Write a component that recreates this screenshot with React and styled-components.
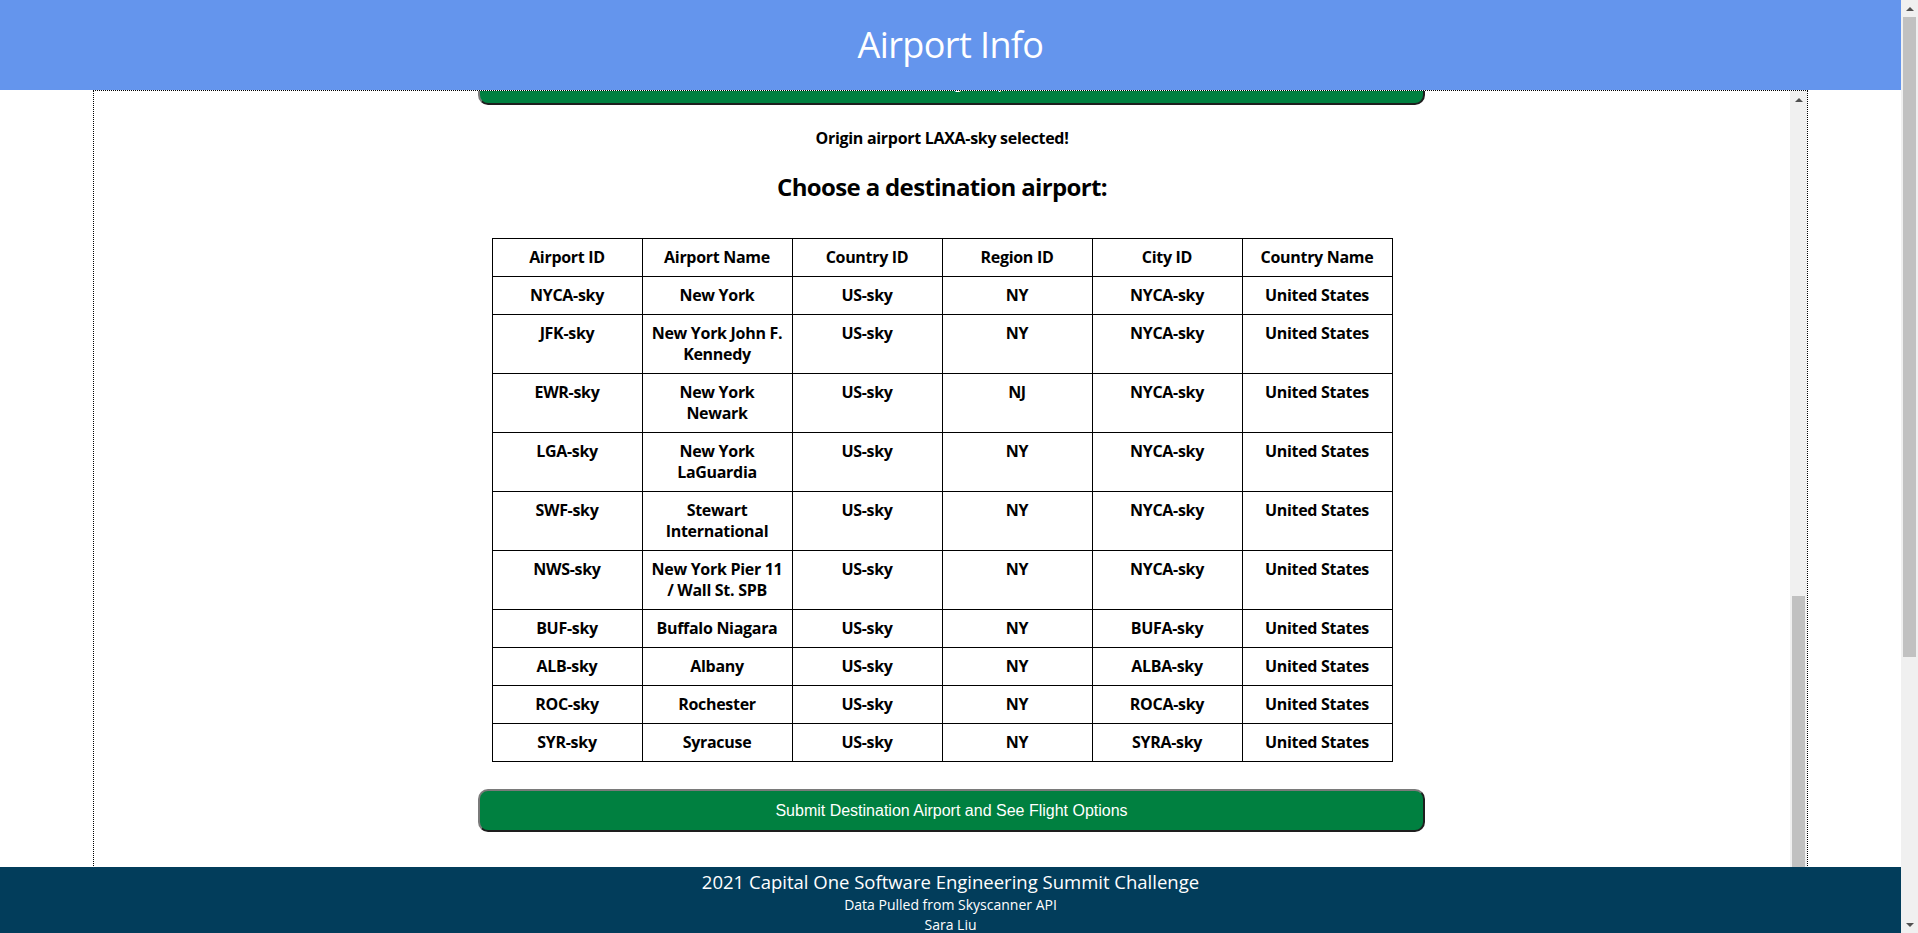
import React, { useLayoutEffect, useRef } from "react";
import styled, { createGlobalStyle } from "styled-components";

const GlobalStyle = createGlobalStyle`
  html, body {
    margin: 0;
    padding: 0;
    overflow: hidden;
  }
  body {
    font-family: "Open Sans", "Noto Sans", sans-serif;
    background: #ffffff;
    color: #000000;
  }
`;

/* ---------- window shell with a classic scrollbar rail ---------- */

const Shell = styled.div`
  display: flex;
  height: 100vh;
  overflow: hidden;
`;

const Page = styled.div`
  position: relative;
  flex: 1;
  min-width: 0;
  overflow: hidden;
`;

const Rail = styled.div`
  flex: none;
  width: 17px;
  height: ${(p) => p.$height};
  display: flex;
  flex-direction: column;
  background: #f0f0f0;
`;

const RailButton = styled.div`
  flex: none;
  height: 17px;
  display: flex;
  align-items: center;
  justify-content: center;
`;

const Arrow = styled.span`
  width: 0;
  height: 0;
  border-left: 4px solid transparent;
  border-right: 4px solid transparent;
  ${(p) =>
    p.$down
      ? "border-top: 4px solid #505050;"
      : "border-bottom: 4px solid #505050;"}
`;

const Track = styled.div`
  position: relative;
  flex: 1;
`;

const Thumb = styled.div`
  position: absolute;
  left: 2px;
  right: 2px;
  background: #c1c1c1;
`;

function Scrollbar({ height, thumbTop, thumbHeight }) {
  return (
    <Rail $height={height}>
      <RailButton>
        <Arrow />
      </RailButton>
      <Track>
        <Thumb style={{ top: thumbTop, height: thumbHeight }} />
      </Track>
      <RailButton>
        <Arrow $down />
      </RailButton>
    </Rail>
  );
}

/* ---------- header / footer ---------- */

const Header = styled.header`
  height: 90px;
  background: #6495ed;
  display: flex;
  align-items: center;
  justify-content: center;
`;

const Title = styled.h1`
  margin: 0;
  color: #ffffff;
  font-size: 36px;
  font-weight: 400;
  letter-spacing: -0.6px;
  line-height: 48px;
`;

const Footer = styled.footer`
  position: absolute;
  left: 0;
  right: 0;
  bottom: 0;
  height: 66px;
  box-sizing: border-box;
  padding-top: 2px;
  background: #023d5b;
  color: #ffffff;
  display: flex;
  flex-direction: column;
  align-items: center;
  overflow: hidden;
`;

const FooterTitle = styled.div`
  font-size: 18.5px;
  line-height: 26px;
`;

const FooterLine = styled.div`
  font-size: 14px;
  line-height: 20px;
`;

/* ---------- scrolling panel ---------- */

const Panel = styled.main`
  display: flex;
  box-sizing: border-box;
  margin: 0 93px;
  height: 1200px;
  border: 1px dotted #000000;
`;

const PanelViewport = styled.div`
  position: relative;
  flex: 1;
  min-width: 0;
  overflow: hidden;
`;

/* the panel is scrolled: earlier steps of the form sit above the visible area */
const Content = styled.div`
  display: flex;
  flex-direction: column;
  align-items: center;
  padding: 815px 0 460px;
`;

const SubmitButton = styled.button`
  align-self: flex-start;
  margin: ${(p) => p.$top}px 0 0 384px;
  width: 947px;
  height: 43px;
  box-sizing: border-box;
  border-style: solid;
  border-width: 2px;
  border-color: #7a7a7a #1e1e1e #1e1e1e #7a7a7a;
  border-radius: 10px;
  background: #008040;
  color: #ffffff;
  font-family: "Liberation Sans", Arial, sans-serif;
  font-size: 16px;
  line-height: 37px;
  padding: 0;
  cursor: pointer;
`;

const Notice = styled.p`
  margin: 22px 0 0;
  font-size: 16px;
  font-weight: 700;
  line-height: 22px;
  letter-spacing: -0.3px;
`;

const Heading = styled.h2`
  margin: 21px 0 0;
  font-size: 24px;
  font-weight: 700;
  line-height: 33px;
  letter-spacing: -0.65px;
`;

const Table = styled.table`
  margin-top: ${(p) => p.$top}px;
  border-collapse: collapse;
  table-layout: fixed;
  width: 901px;
`;

const Cell = styled.td`
  width: 150px;
  box-sizing: border-box;
  border: 1px solid #000000;
  padding: 8px;
  vertical-align: top;
  text-align: center;
  font-size: 16px;
  font-weight: 700;
  line-height: 21px;
  letter-spacing: -0.3px;
`;

const HeadCell = styled(Cell).attrs({ as: "th" })``;

const columns = ["Airport ID", "Airport Name", "Country ID", "Region ID", "City ID", "Country Name"];

const destinationAirports = [
  ["NYCA-sky", "New York", "US-sky", "NY", "NYCA-sky", "United States"],
  ["JFK-sky", "New York John F. Kennedy", "US-sky", "NY", "NYCA-sky", "United States"],
  ["EWR-sky", "New York Newark", "US-sky", "NJ", "NYCA-sky", "United States"],
  ["LGA-sky", "New York LaGuardia", "US-sky", "NY", "NYCA-sky", "United States"],
  ["SWF-sky", "Stewart International", "US-sky", "NY", "NYCA-sky", "United States"],
  ["NWS-sky", "New York Pier 11 / Wall St. SPB", "US-sky", "NY", "NYCA-sky", "United States"],
  ["BUF-sky", "Buffalo Niagara", "US-sky", "NY", "BUFA-sky", "United States"],
  ["ALB-sky", "Albany", "US-sky", "NY", "ALBA-sky", "United States"],
  ["ROC-sky", "Rochester", "US-sky", "NY", "ROCA-sky", "United States"],
  ["SYR-sky", "Syracuse", "US-sky", "NY", "SYRA-sky", "United States"],
];

function AirportTable({ rows, top }) {
  return (
    <Table $top={top}>
      <thead>
        <tr>
          {columns.map((c) => (
            <HeadCell key={c}>{c}</HeadCell>
          ))}
        </tr>
      </thead>
      <tbody>
        {rows.map((r) => (
          <tr key={r[0]}>
            {r.map((v, i) => (
              <Cell key={i}>{v}</Cell>
            ))}
          </tr>
        ))}
      </tbody>
    </Table>
  );
}

export default function App() {
  const viewportRef = useRef(null);
  const originBtnRef = useRef(null);

  useLayoutEffect(() => {
    const vp = viewportRef.current;
    const btn = originBtnRef.current;
    if (vp && btn) {
      vp.scrollTop = btn.offsetTop + btn.offsetHeight - 14;
    }
  }, []);

  return (
    <>
      <GlobalStyle />
      <Shell>
        <Page>
          <Header>
            <Title>Airport Info</Title>
          </Header>
          <Panel>
            <PanelViewport ref={viewportRef}>
              <Content>
                <SubmitButton ref={originBtnRef} $top={20} type="button">
                  Submit Origin Airport
                </SubmitButton>
                <Notice>Origin airport LAXA-sky selected!</Notice>
                <Heading>Choose a destination airport:</Heading>
                <AirportTable rows={destinationAirports} top={35} />
                <SubmitButton $top={27} type="button">
                  Submit Destination Airport and See Flight Options
                </SubmitButton>
              </Content>
            </PanelViewport>
            <Scrollbar height="1198px" thumbTop={488} thumbHeight={700} />
          </Panel>
          <Footer>
            <FooterTitle>2021 Capital One Software Engineering Summit Challenge</FooterTitle>
            <FooterLine>Data Pulled from Skyscanner API</FooterLine>
            <FooterLine>Sara Liu</FooterLine>
          </Footer>
        </Page>
        <Scrollbar height="100%" thumbTop={0} thumbHeight={640} />
      </Shell>
    </>
  );
}
